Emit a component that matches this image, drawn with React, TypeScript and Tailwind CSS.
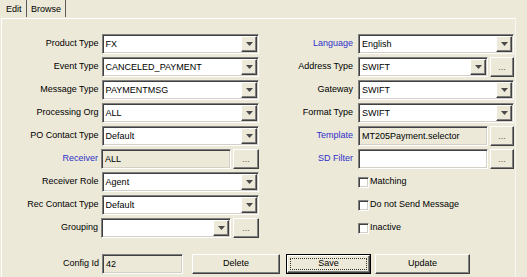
const sunken =
  "border border-t-[#808080] border-l-[#808080] border-r-white border-b-white shadow-[inset_1px_1px_0_#404040,inset_-1px_-1px_0_#d4d0c8]";
const raised =
  "border border-t-white border-l-white border-r-[#404040] border-b-[#404040] shadow-[inset_-1px_-1px_0_#808080]";

function Arrow() {
  return (
    <svg width="7" height="4" viewBox="0 0 7 4">
      <path d="M0 0h7L3.5 4z" fill="#4a4a4a" />
    </svg>
  );
}

function Combo({ value = "", width }: { value?: string; width: string }) {
  return (
    <div className={`flex h-[20px] ${width} ${sunken} bg-white p-[1px]`}>
      <span className="flex-1 truncate pl-[2px] leading-[16px]">{value}</span>
      <span className={`flex w-[16px] items-center justify-center ${raised} bg-[#ECE9D8]`}>
        <Arrow />
      </span>
    </div>
  );
}

function TextBox({ value = "", width, white }: { value?: string; width: string; white?: boolean }) {
  return (
    <div className={`h-[20px] ${width} ${sunken} ${white ? "bg-white" : "bg-[#ECE9D8]"} pl-[3px] leading-[18px]`}>
      {value}
    </div>
  );
}

function Dots({ width }: { width: string }) {
  return (
    <div className={`flex h-[20px] ${width} items-center justify-center ${raised} bg-[#ECE9D8] text-[#555] leading-none`}>
      ...
    </div>
  );
}

function Check({ label }: { label: string }) {
  return (
    <div className="flex h-[20px] items-center">
      <span className={`h-[11px] w-[11px] ${sunken} bg-white`} />
      <span className="ml-[1px]">{label}</span>
    </div>
  );
}

function Row({ label, blue, left, children }: { label?: string; blue?: boolean; left?: boolean; children: React.ReactNode }) {
  return (
    <div className="flex h-[20px] items-center">
      <span
        className={`${left ? "w-[100px] pr-[3px]" : "w-[99px] pr-[5px]"} text-right ${blue ? "text-[#3030c8]" : "text-black"}`}
      >
        {label}
      </span>
      {children}
    </div>
  );
}

export default function App() {
  return (
    <div className="h-[277px] w-[527px] overflow-hidden bg-[#ECE9D8] font-['Liberation_Sans',Arial,sans-serif] text-[9px] text-black">
      <div className="flex h-[18px]">
        <div className="ml-[2px] h-[17px] w-[25px] border-r border-[#5a5a5a] pl-[4px] pt-[3px]">Edit</div>
        <div className="h-[17px] w-[39px] border-r border-[#5a5a5a] pl-[4px] pt-[3px]">Browse</div>
      </div>
      <div className="ml-[1px] h-[259px] w-[515px] border-l border-t border-r border-l-white border-t-white border-r-[#f7f6f0] pt-[15px]">
        <div className="flex">
          <div className="flex w-[257px] flex-col gap-[3px]">
            <Row left label="Product Type">
              <Combo value="FX" width="w-[158px]" />
            </Row>
            <Row left label="Event Type">
              <Combo value="CANCELED_PAYMENT" width="w-[158px]" />
            </Row>
            <Row left label="Message Type">
              <Combo value="PAYMENTMSG" width="w-[158px]" />
            </Row>
            <Row left label="Processing Org">
              <Combo value="ALL" width="w-[158px]" />
            </Row>
            <Row left label="PO Contact Type">
              <Combo value="Default" width="w-[158px]" />
            </Row>
            <Row left blue label="Receiver">
              <div className="flex gap-[2px]">
                <TextBox value="ALL" width="w-[130px]" />
                <Dots width="w-[26px]" />
              </div>
            </Row>
            <Row left label="Receiver Role">
              <Combo value="Agent" width="w-[158px]" />
            </Row>
            <Row left label="Rec Contact Type">
              <Combo value="Default" width="w-[158px]" />
            </Row>
            <Row left label="Grouping">
              <div className="flex gap-[2px]">
                <Combo width="w-[130px]" />
                <Dots width="w-[26px]" />
              </div>
            </Row>
          </div>
          <div className="flex flex-col gap-[3px]">
            <Row blue label="Language">
              <Combo value="English" width="w-[156px]" />
            </Row>
            <Row label="Address Type">
              <div className="flex gap-[2px]">
                <Combo value="SWIFT" width="w-[130px]" />
                <Dots width="w-[24px]" />
              </div>
            </Row>
            <Row label="Gateway">
              <Combo value="SWIFT" width="w-[156px]" />
            </Row>
            <Row label="Format Type">
              <Combo value="SWIFT" width="w-[156px]" />
            </Row>
            <Row blue label="Template">
              <div className="flex gap-[2px]">
                <TextBox value="MT205Payment.selector" width="w-[130px]" />
                <Dots width="w-[24px]" />
              </div>
            </Row>
            <Row blue label="SD Filter">
              <div className="flex gap-[2px]">
                <TextBox white width="w-[130px]" />
                <Dots width="w-[24px]" />
              </div>
            </Row>
            <Row>
              <Check label="Matching" />
            </Row>
            <Row>
              <Check label="Do not Send Message" />
            </Row>
            <Row>
              <Check label="Inactive" />
            </Row>
          </div>
        </div>
        <div className="mt-[16px] flex h-[20px] items-center">
          <span className="w-[100px] pr-[3px] text-right">Config Id</span>
          <TextBox value="42" width="w-[81px]" />
          <button className={`ml-[9px] h-[20px] w-[88px] ${raised} bg-[#ECE9D8]`}>Delete</button>
          <button className="ml-[6px] h-[20px] w-[85px] border border-black bg-[#ECE9D8]">
            <div className={`flex h-full w-full items-center justify-center ${raised} p-[2px]`}>
              <div className="flex h-full w-full items-center justify-center border border-dotted border-[#333]">Save</div>
            </div>
          </button>
          <button className={`ml-[4px] h-[20px] w-[95px] ${raised} bg-[#ECE9D8]`}>Update</button>
        </div>
      </div>
    </div>
  );
}
